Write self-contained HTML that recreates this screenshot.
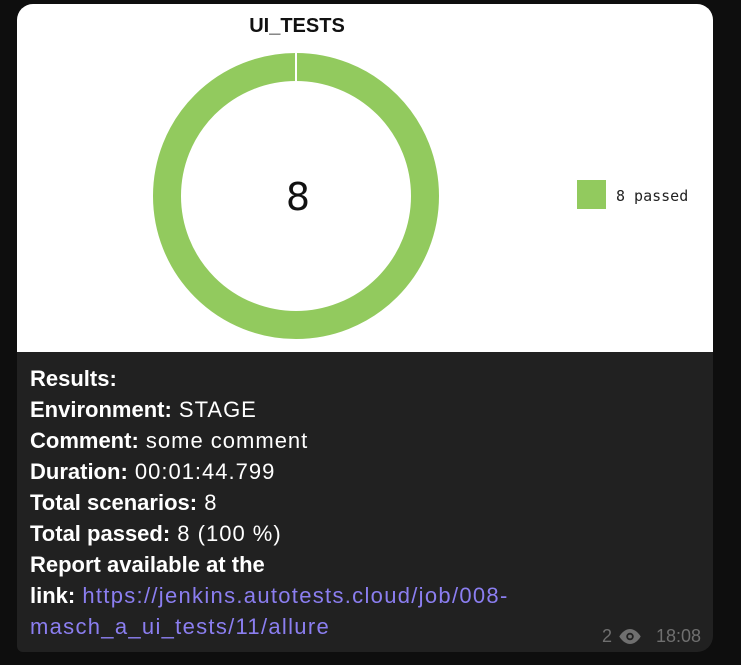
<!DOCTYPE html>
<html><head><style>
body{margin:0;background:#0e0e0e;width:741px;height:665px;overflow:hidden;font-family:"Liberation Sans",sans-serif;}
.card{position:absolute;left:17px;top:4px;width:696px;height:648px;background:#212121;border-radius:16px 16px 16px 6px;overflow:hidden;}
.img{position:absolute;left:0;top:0;width:696px;height:348px;background:#fff;}
.txt{position:absolute;left:13px;top:359px;color:#fff;font-size:22px;line-height:31px;letter-spacing:1px;}
.txt b{font-weight:bold;letter-spacing:0;}
.txt a{color:#8b7ef0;text-decoration:none;letter-spacing:1.3px;}
.meta{position:absolute;right:12px;bottom:5px;color:#6f6f6f;font-size:18px;display:flex;align-items:center;gap:6px;}
</style></head><body>
<div class="card">
<div class="img">
<svg width="696" height="348">
<text x="280" y="28" text-anchor="middle" font-family="Liberation Sans" font-weight="bold" font-size="20" fill="#111">UI_TESTS</text>
<circle cx="279" cy="192" r="129" fill="none" stroke="#92ca5e" stroke-width="28"/>
<line x1="279" y1="49" x2="279" y2="77" stroke="#fff" stroke-width="2"/>
<text x="281" y="206" text-anchor="middle" font-family="DejaVu Sans" font-size="38" fill="#111">8</text>
<rect x="560" y="176" width="29" height="29" fill="#92ca5e"/>
<text x="599" y="197" font-family="DejaVu Sans Mono" font-size="15" fill="#222">8 passed</text>
</svg>
</div>
<div class="txt">
<b>Results:</b><br>
<b>Environment:</b> STAGE<br>
<b>Comment:</b> some comment<br>
<b>Duration:</b> 00:01:44.799<br>
<b>Total scenarios:</b> 8<br>
<b>Total passed:</b> 8 (100 %)<br>
<b>Report available at the</b><br>
<b>link:</b> <a>https://jenkins.autotests.cloud/job/008-</a><br>
<a>masch_a_ui_tests/11/allure</a>
</div>
<div class="meta"><span>2</span><svg width="24" height="15" viewBox="0 0 22 14"><path d="M1 7C4 2 8 0 11 0s7 2 10 7c-3 5-7 7-10 7S4 12 1 7z" fill="#6f6f6f"/><circle cx="11" cy="7" r="3.5" fill="#212121"/><circle cx="11" cy="7" r="1.8" fill="#6f6f6f"/></svg><span style="margin-left:8px">18:08</span></div>
</div>
</body></html>
